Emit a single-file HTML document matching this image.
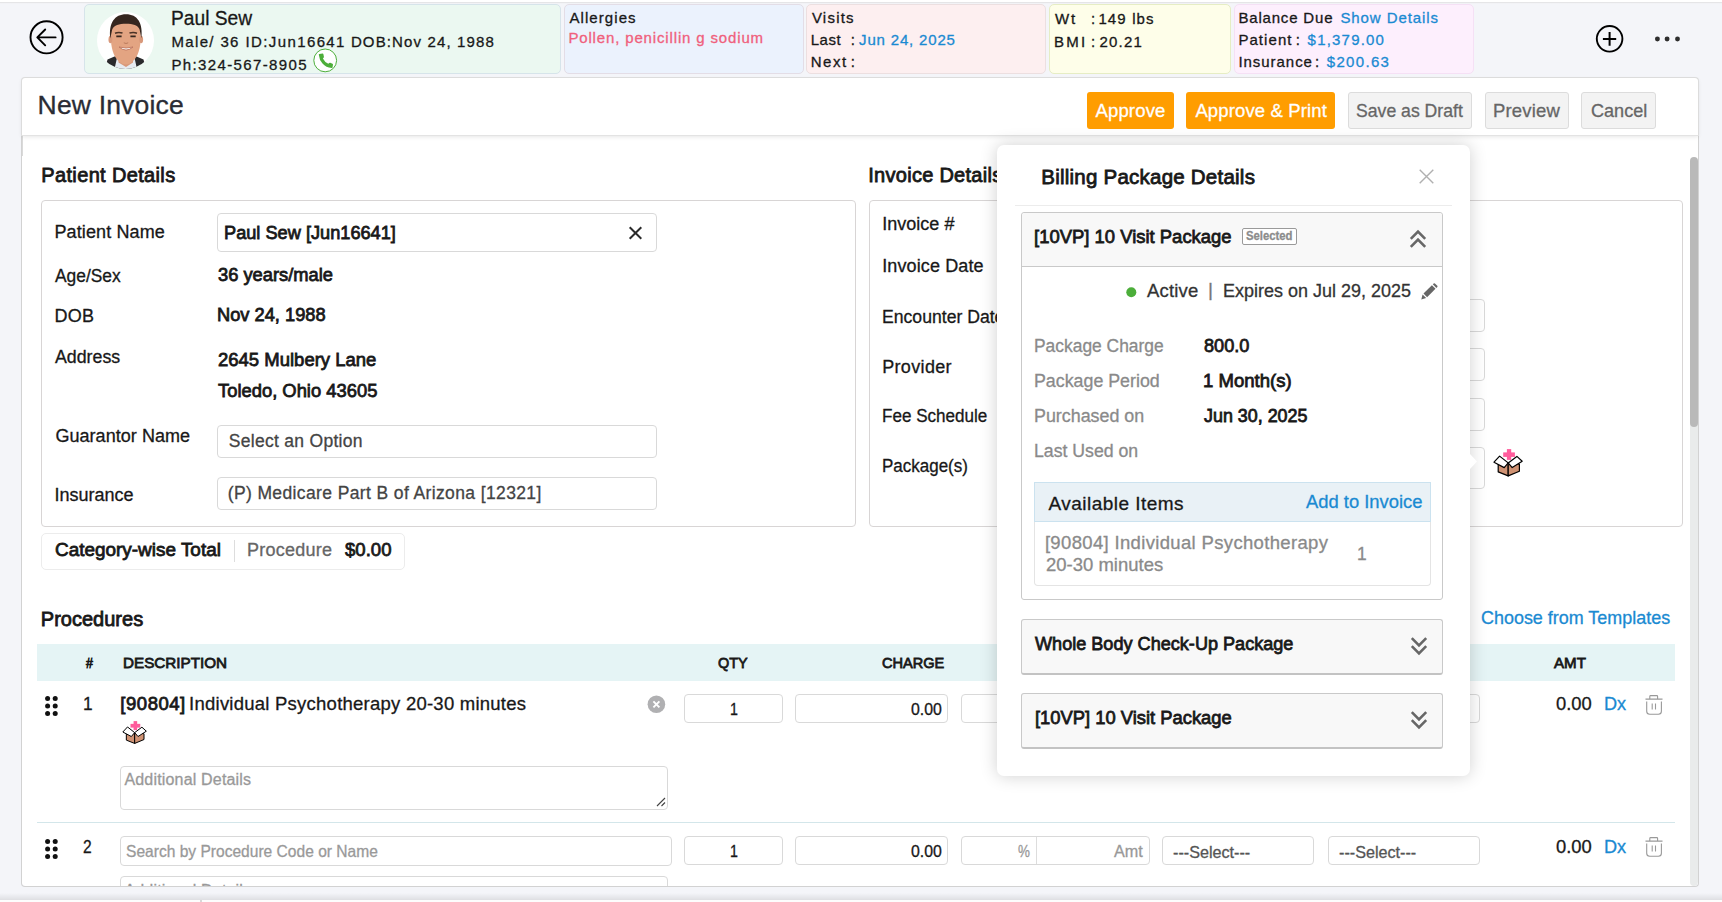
<!DOCTYPE html>
<html lang="en">
<head>
<meta charset="utf-8">
<title>New Invoice</title>
<style>
*{box-sizing:border-box;margin:0;padding:0}
html,body{width:1722px;height:902px;overflow:hidden}
body{position:relative;background:#f4f5f9;font-family:"Liberation Sans",sans-serif;color:#1f1f1f}
.t{position:absolute;white-space:pre;display:block;transform-origin:0 50%;-webkit-text-stroke:.3px}
.abs,.card,.inp,.btn,.ic,.pkg,.box{position:absolute}
svg{display:block;overflow:visible}
#topshade{position:absolute;left:0;top:0;width:1722px;height:5px;background:linear-gradient(#fff 0,#fff 1.8px,#e4e4e6 2px,#e6e6e8 3px,#f4f5f9 3.6px)}
#top{position:absolute;left:0;top:0;width:1722px;height:78px}
.card{top:4px;height:70px;border:1px solid #d9e3ea;border-radius:5px}
#title{position:absolute;left:22px;top:78px;width:1676px;height:57px;background:#fff;border-radius:3px 3px 0 0;box-shadow:0 2px 4px rgba(0,0,0,.10);z-index:3}
#main{position:absolute;left:22px;top:135px;width:1676px;height:751px;background:#fff;border-radius:0 0 4px 4px;overflow:hidden;z-index:1}
#tframe{position:absolute;left:21px;top:77px;width:1678px;height:59px;border:1px solid #dcdcdc;border-bottom-color:#e3e3e3;border-radius:4px 4px 0 0;z-index:4;pointer-events:none}
#mframe{position:absolute;left:21px;top:135px;width:1678px;height:752px;border:1px solid #d2d2d2;border-top:none;border-radius:0 0 4px 4px;z-index:2;pointer-events:none}
.btn{top:14px;height:37px;border-radius:3px}
.btn.o{background:#ff9d00}
.btn.g{background:#f3f3f3;border:1px solid #dcdcdc}
.box{border:1px solid #d8d5d5;border-radius:4px;background:#fff}
.inp{border:1px solid #d9d9d9;border-radius:4px;background:#fff}
#modal{position:absolute;left:997px;top:145px;width:473px;height:631px;background:#fff;border-radius:7px;box-shadow:0 0 17px rgba(0,0,0,.19);z-index:5}
.acc{position:absolute;left:24px;width:422px;border:1px solid #c9c9c9;border-radius:3px;background:#f8f8f8}
.acc.c{border-bottom:2px solid #c3c3c3}
</style>
</head>
<body>
<div id="topshade"></div>
<header id="top">
  <svg class="ic" style="left:28px;top:20.4px" width="37" height="37" viewBox="0 0 37 37" fill="none" stroke="#000" stroke-width="1.9" stroke-linecap="round" stroke-linejoin="round"><circle cx="18.55" cy="17.35" r="16.05"/><path d="M27.6 17.4H9.8M17.2 9.5L9.3 17.4L17.2 25.3"/></svg>
  <section class="card" style="left:84px;width:477px;background:#ebf8f1;border-color:#d6e4ea"></section>
  <svg class="ic" style="left:97px;top:12px;overflow:hidden;border-radius:50%;background:#fff" width="57" height="57" viewBox="0 0 57 57">
    <g>
      <path d="M8 57L10.5 47.5L21 43L36 43L46.5 47.5L49 57Z" fill="#2a2a2c"/>
      <path d="M17.5 57L20.5 43.5L29 53L37 43.5L40 57Z" fill="#e6ebf1"/>
      <path d="M21.5 38H36V50.5L29 55L21.5 50.5Z" fill="#d8987a"/>
      <path d="M13.8 24C13.8 12 19 8 28.8 8C38.6 8 43.8 12 43.8 24C43.8 36 41 44 36.5 48.5C33.5 51.5 31 52.5 28.8 52.5C26.600000000000001 52.5 24 51.5 21 48.5C16.5 44 13.8 36 13.8 24Z" fill="#e3a482"/>
      <ellipse cx="13.4" cy="27.5" rx="1.9" ry="3.8" fill="#d8987a"/><ellipse cx="44.2" cy="27.5" rx="1.9" ry="3.8" fill="#d8987a"/>
      <path d="M13.3 26.5C11.5 11 17.5 2.2 29 2.2C40.5 2.2 46.2 11 44.4 26.5L42.6 17.5C41 13.4 36 11.8 29 11.8C22 11.8 17 13.4 15.2 17.5Z" fill="#35261f"/>
      <path d="M18 21.2Q21.5 19.8 25.5 21M32.5 21Q36.5 19.8 40 21.2" stroke="#4a3226" stroke-width="1.5" fill="none"/>
      <path d="M19.3 24.4H24.6M33.4 24.4H38.7" stroke="#35261f" stroke-width="1.9" fill="none"/>
      <path d="M22 35Q29 41 36 35Q29 37.2 22 35Z" fill="#fff" stroke="#b86f58" stroke-width=".8"/>
      <path d="M26.8 30.8Q29 32.2 31.2 30.8" stroke="#b97b5d" stroke-width="1" fill="none"/>
    </g>
  </svg>
  <svg class="ic" style="left:312.5px;top:48px" width="25" height="25" viewBox="0 0 25 25"><circle cx="12.2" cy="12.4" r="11.4" fill="#fff" stroke="#4cae3a" stroke-width="1"/><path d="M6.3 5.9L9.6 5.6Q10.3 5.6 10.4 6.3L10.9 8.7Q11 9.3 10.6 9.7L9.9 10.5Q11.6 14 15.3 15.8L16.2 15Q16.7 14.6 17.3 14.8L19.5 15.7Q20.1 16 20 16.7L19.5 19.6Q19.3 20.2 18.6 20.1Q13 19.6 9.5 15.6Q6.2 11.8 5.8 6.7Q5.7 6 6.3 5.9Z" fill="#4cae3a"/></svg>
  <section class="card" style="left:564px;width:240px;background:#ebf2fd;border-color:#e3dde6"></section>
  <section class="card" style="left:806px;width:240px;background:#fdeff0;border-color:#ecdfe0"></section>
  <section class="card" style="left:1049px;width:182px;background:#fefee9;border-color:#e6edc4"></section>
  <section class="card" style="left:1234px;width:240px;background:#fdeffd;border-color:#f5e0f5"></section>
  <svg class="ic" style="left:1595px;top:25px" width="29" height="29" viewBox="0 0 29 29" fill="none" stroke="#000" stroke-width="1.9"><circle cx="14.6" cy="13.85" r="12.8"/><path d="M14.6 7.1V20.7M7.9 13.9H21.2" stroke-width="2"/></svg>
  <svg class="ic" style="left:1654px;top:36px" width="28" height="6" viewBox="0 0 28 6" fill="#2e2e2e"><circle cx="3.4" cy="3" r="2.45"/><circle cx="13.1" cy="3" r="2.45"/><circle cx="23.5" cy="3" r="2.45"/></svg>
  <span class="t" style="left:171.4px;top:7.0px;font-size:20px;line-height:22px;color:#181818;transform:scaleX(0.9602);">Paul Sew</span>
<span class="t" style="left:171.4px;top:33.0px;font-size:15px;line-height:17px;color:#181818;letter-spacing:1.36px;">Male/ 36</span>
<span class="t" style="left:245.4px;top:33.0px;font-size:15px;line-height:17px;color:#181818;letter-spacing:1.40px;">ID:Jun16641</span>
<span class="t" style="left:350.9px;top:33.0px;font-size:15px;line-height:17px;color:#181818;letter-spacing:1.14px;">DOB:Nov 24, 1988</span>
<span class="t" style="left:171.4px;top:56.0px;font-size:15px;line-height:17px;color:#181818;letter-spacing:1.37px;">Ph:324-567-8905</span>
<span class="t" style="left:569.4px;top:9.0px;font-size:15px;line-height:17px;color:#181818;letter-spacing:1.08px;">Allergies</span>
<span class="t" style="left:568.4px;top:29.0px;font-size:15px;line-height:17px;color:#f0607c;letter-spacing:0.85px;">Pollen, penicillin g sodium</span>
<span class="t" style="left:811.9px;top:9.0px;font-size:15px;line-height:17px;color:#181818;letter-spacing:1.23px;">Visits</span>
<span class="t" style="left:810.7px;top:31.0px;font-size:15px;line-height:17px;color:#181818;letter-spacing:0.57px;">Last</span>
<span class="t" style="left:850.7px;top:31.0px;font-size:15px;line-height:17px;color:#181818;">:</span>
<span class="t" style="left:859.1px;top:31.0px;font-size:15px;line-height:17px;color:#1a8ad2;letter-spacing:0.83px;">Jun 24, 2025</span>
<span class="t" style="left:810.7px;top:53.0px;font-size:15px;line-height:17px;color:#181818;letter-spacing:1.58px;">Next</span>
<span class="t" style="left:850.7px;top:53.0px;font-size:15px;line-height:17px;color:#181818;">:</span>
<span class="t" style="left:1054.9px;top:10.0px;font-size:15px;line-height:17px;color:#181818;letter-spacing:2.04px;">Wt</span>
<span class="t" style="left:1090.9px;top:10.0px;font-size:15px;line-height:17px;color:#181818;">:</span>
<span class="t" style="left:1098.4px;top:10.0px;font-size:15px;line-height:17px;color:#181818;letter-spacing:1.14px;">149 lbs</span>
<span class="t" style="left:1053.9px;top:33.0px;font-size:15px;line-height:17px;color:#181818;letter-spacing:2.35px;">BMI</span>
<span class="t" style="left:1090.9px;top:33.0px;font-size:15px;line-height:17px;color:#181818;">:</span>
<span class="t" style="left:1099.4px;top:33.0px;font-size:15px;line-height:17px;color:#181818;letter-spacing:1.25px;">20.21</span>
<span class="t" style="left:1238.4px;top:9.0px;font-size:15px;line-height:17px;color:#181818;letter-spacing:0.82px;">Balance Due</span>
<span class="t" style="left:1340.4px;top:9.0px;font-size:15px;line-height:17px;color:#1a8ad2;letter-spacing:0.92px;">Show Details</span>
<span class="t" style="left:1238.4px;top:31.0px;font-size:15px;line-height:17px;color:#181818;letter-spacing:1.06px;">Patient</span>
<span class="t" style="left:1295.8px;top:31.0px;font-size:15px;line-height:17px;color:#181818;">:</span>
<span class="t" style="left:1307.6px;top:31.0px;font-size:15px;line-height:17px;color:#1a8ad2;letter-spacing:1.20px;">$1,379.00</span>
<span class="t" style="left:1238.4px;top:53.0px;font-size:15px;line-height:17px;color:#181818;letter-spacing:0.96px;">Insurance</span>
<span class="t" style="left:1315.1px;top:53.0px;font-size:15px;line-height:17px;color:#181818;">:</span>
<span class="t" style="left:1326.8px;top:53.0px;font-size:15px;line-height:17px;color:#1a8ad2;letter-spacing:1.32px;">$200.63</span>
</header>

<div id="title">
  <div class="btn o" style="left:1065px;width:87px"></div>
  <div class="btn o" style="left:1164px;width:149px"></div>
  <div class="btn g" style="left:1326px;width:124px"></div>
  <div class="btn g" style="left:1463px;width:84px"></div>
  <div class="btn g" style="left:1559px;width:75px"></div>
  <span class="t" style="left:15.6px;top:12.0px;font-size:26.5px;line-height:30px;color:#2a2c35;letter-spacing:0.17px;">New Invoice</span>
<span class="t" style="left:1073.4px;top:22.0px;font-size:18.5px;line-height:21px;color:#fff;letter-spacing:0.18px;">Approve</span>
<span class="t" style="left:1173.4px;top:22.0px;font-size:18.5px;line-height:21px;color:#fff;letter-spacing:0.13px;">Approve &amp; Print</span>
<span class="t" style="left:1334.4px;top:22.0px;font-size:18.5px;line-height:21px;color:#666;transform:scaleX(0.9532);">Save as Draft</span>
<span class="t" style="left:1470.9px;top:22.0px;font-size:18.5px;line-height:21px;color:#666;letter-spacing:0.21px;">Preview</span>
<span class="t" style="left:1568.9px;top:22.0px;font-size:18.5px;line-height:21px;color:#666;transform:scaleX(0.9774);">Cancel</span>
</div>

<div id="tframe"></div>
<div id="mframe"></div>
<main id="main">
  <i class="abs" style="left:0;top:0;width:1px;height:21px;background:#dadada"></i>
  <!-- patient details -->
  <section class="box" style="left:19px;top:65px;width:815px;height:327px"></section>
  <div class="inp" style="left:195px;top:78px;width:440px;height:39px"></div>
  <svg class="ic" style="left:606px;top:91px" width="15" height="14" viewBox="0 0 15 14" fill="none" stroke="#2a2a2a" stroke-width="2"><path d="M1.7 1.2L13.3 12.8M13.3 1.2L1.7 12.8"/></svg>
  <div class="inp" style="left:195px;top:290px;width:440px;height:33px"></div>
  <div class="inp" style="left:195px;top:342px;width:440px;height:32.5px"></div>
  <section class="box" style="left:19px;top:398px;width:364px;height:36.5px;border-color:#ececec;border-radius:5px"></section>
  <i class="abs" style="left:212px;top:405px;width:1px;height:22px;background:#ddd"></i>
  <!-- invoice details -->
  <section class="box" style="left:847px;top:65px;width:814px;height:327px"></section>
  <div class="inp" style="left:1140px;top:164px;width:323px;height:32.5px"></div>
  <div class="inp" style="left:1140px;top:213px;width:323px;height:33px"></div>
  <div class="inp" style="left:1140px;top:263px;width:323px;height:33px"></div>
  <div class="inp" style="left:1140px;top:312px;width:323px;height:42px"></div>
  <svg class="pkg" viewBox="0 0 30 28" width="30" height="28" style="left:1471px;top:313.8px">
<polygon points="5.2,15.2 15.2,13.9 15.2,26.9 5.2,22.9" fill="#cf9273" stroke="#000" stroke-width="1.2" stroke-linejoin="round"/>
<polygon points="15.2,13.9 26.4,15.2 26.4,22.2 15.2,26.9" fill="#cf9273" stroke="#000" stroke-width="1.2" stroke-linejoin="round"/>
<polygon points="6.6,7.1 1,13.2 11.2,18.6 15.2,13.9" fill="#fff" stroke="#000" stroke-width="1.2" stroke-linejoin="round"/>
<polygon points="23.9,7.4 29.2,12.2 19.2,18.6 15.2,13.9" fill="#fff" stroke="#000" stroke-width="1.2" stroke-linejoin="round"/>
<rect x="13.9" y="0.1" width="4.3" height="10.8" fill="#ff5c9c"/>
<rect x="10.2" y="3.4" width="11.7" height="4.5" fill="#ff5c9c"/>
</svg>
  <!-- procedures -->
  <div class="abs" style="left:15px;top:509px;width:1638px;height:37px;background:#e5f4f5"></div>
  <svg class="ic" viewBox="0 0 14 20" width="14" height="20" style="left:23px;top:560.5px" fill="#111">
<circle cx="2.6" cy="2.6" r="2.5"/><circle cx="10.2" cy="2.6" r="2.5"/>
<circle cx="2.6" cy="10" r="2.5"/><circle cx="10.2" cy="10" r="2.5"/>
<circle cx="2.6" cy="17.4" r="2.5"/><circle cx="10.2" cy="17.4" r="2.5"/></svg>
  <svg class="pkg" viewBox="0 0 30 28" width="25" height="23.4" style="left:100px;top:586px">
<polygon points="5.2,15.2 15.2,13.9 15.2,26.9 5.2,22.9" fill="#cf9273" stroke="#000" stroke-width="1.2" stroke-linejoin="round"/>
<polygon points="15.2,13.9 26.4,15.2 26.4,22.2 15.2,26.9" fill="#cf9273" stroke="#000" stroke-width="1.2" stroke-linejoin="round"/>
<polygon points="6.6,7.1 1,13.2 11.2,18.6 15.2,13.9" fill="#fff" stroke="#000" stroke-width="1.2" stroke-linejoin="round"/>
<polygon points="23.9,7.4 29.2,12.2 19.2,18.6 15.2,13.9" fill="#fff" stroke="#000" stroke-width="1.2" stroke-linejoin="round"/>
<rect x="13.9" y="0.1" width="4.3" height="10.8" fill="#ff5c9c"/>
<rect x="10.2" y="3.4" width="11.7" height="4.5" fill="#ff5c9c"/>
</svg>
  <svg class="ic" style="left:625px;top:560px" width="19" height="19" viewBox="0 0 19 19"><circle cx="9.4" cy="9.2" r="8.8" fill="#b0b0b2"/><path d="M6.4 6.3L12.4 12.3M12.4 6.3L6.4 12.3" stroke="#fff" stroke-width="1.9" fill="none"/></svg>
  <div class="inp" style="left:98px;top:630.5px;width:548px;height:44px"></div>
  <svg class="ic" style="left:634px;top:662px" width="10" height="10" viewBox="0 0 10 10" fill="none" stroke="#444" stroke-width="1.1"><path d="M1 9L9 1M5.5 9L9 5.5"/></svg>
  
<div class="inp" style="left:662px;top:558.5px;width:99px;height:29.4px"></div>
<div class="inp" style="left:773px;top:558.5px;width:153px;height:29.4px"></div>
<div class="inp" style="left:939px;top:558.5px;width:189px;height:29.4px"><i style="position:absolute;left:74px;top:0;width:1px;height:27.4px;background:#ddd"></i></div>
<div class="inp" style="left:1140px;top:558.5px;width:152px;height:29.4px"></div>
<div class="inp" style="left:1306px;top:558.5px;width:152px;height:29.4px"></div>
<svg class="ic" viewBox="0 0 18 20" width="18" height="20" style="left:1623px;top:560px" fill="none" stroke="#999" stroke-width="1.1">
<path d="M0.5 4.1H17.5M4.8 4.1V1.4Q4.8 0.6 5.6 0.6H11.8Q12.6 0.6 12.6 1.4V4.1M1.7 6.5V16.3Q1.7 19.3 4.7 19.3H13.4Q16.4 19.3 16.4 16.3V6.5M7.2 8.4V14.5M10.5 8.4V14.5"/>
</svg>
  <i class="abs" style="left:15px;top:686.5px;width:1638px;height:1.4px;background:#d3e6ea"></i>
  <svg class="ic" viewBox="0 0 14 20" width="14" height="20" style="left:23px;top:703.5px" fill="#111">
<circle cx="2.6" cy="2.6" r="2.5"/><circle cx="10.2" cy="2.6" r="2.5"/>
<circle cx="2.6" cy="10" r="2.5"/><circle cx="10.2" cy="10" r="2.5"/>
<circle cx="2.6" cy="17.4" r="2.5"/><circle cx="10.2" cy="17.4" r="2.5"/></svg>
  <div class="inp" style="left:98px;top:701px;width:552px;height:30px"></div>
  
<div class="inp" style="left:662px;top:701px;width:99px;height:29.4px"></div>
<div class="inp" style="left:773px;top:701px;width:153px;height:29.4px"></div>
<div class="inp" style="left:939px;top:701px;width:189px;height:29.4px"><i style="position:absolute;left:74px;top:0;width:1px;height:27.4px;background:#ddd"></i></div>
<div class="inp" style="left:1140px;top:701px;width:152px;height:29.4px"></div>
<div class="inp" style="left:1306px;top:701px;width:152px;height:29.4px"></div>
<svg class="ic" viewBox="0 0 18 20" width="18" height="20" style="left:1623px;top:701.5px" fill="none" stroke="#999" stroke-width="1.1">
<path d="M0.5 4.1H17.5M4.8 4.1V1.4Q4.8 0.6 5.6 0.6H11.8Q12.6 0.6 12.6 1.4V4.1M1.7 6.5V16.3Q1.7 19.3 4.7 19.3H13.4Q16.4 19.3 16.4 16.3V6.5M7.2 8.4V14.5M10.5 8.4V14.5"/>
</svg>
  <div class="inp" style="left:98px;top:741px;width:548px;height:44px"></div>
  <!-- scrollbar -->
  <div class="abs" style="left:1668.2px;top:26px;width:7.8px;height:725px;background:#e9ebeb;border-radius:0 0 4px 4px"></div>
  <div class="abs" style="left:1668.2px;top:22.2px;width:7.8px;height:269.8px;background:#b9b9b9;border-radius:4px"></div>
  <span class="t" style="left:19.3px;top:29.0px;font-size:20px;line-height:22px;color:#181818;-webkit-text-stroke:0.8px;letter-spacing:0.35px;">Patient Details</span>
<span class="t" style="left:32.4px;top:87.0px;font-size:18px;line-height:20px;color:#181818;letter-spacing:0.13px;">Patient Name</span>
<span class="t" style="left:201.5px;top:87.0px;font-size:19px;line-height:21px;color:#181818;-webkit-text-stroke:0.8px;transform:scaleX(0.9572);">Paul Sew [Jun16641]</span>
<span class="t" style="left:33.4px;top:131.0px;font-size:18px;line-height:20px;color:#181818;transform:scaleX(0.9655);">Age/Sex</span>
<span class="t" style="left:196.4px;top:129.0px;font-size:19px;line-height:21px;color:#181818;-webkit-text-stroke:0.8px;transform:scaleX(0.9641);">36 years/male</span>
<span class="t" style="left:32.4px;top:171.0px;font-size:18px;line-height:20px;color:#181818;letter-spacing:0.35px;">DOB</span>
<span class="t" style="left:195.4px;top:169.0px;font-size:19px;line-height:21px;color:#181818;-webkit-text-stroke:0.8px;transform:scaleX(0.9609);">Nov 24, 1988</span>
<span class="t" style="left:33.4px;top:212.0px;font-size:18px;line-height:20px;color:#181818;transform:scaleX(0.9874);">Address</span>
<span class="t" style="left:196.4px;top:214.0px;font-size:19px;line-height:21px;color:#181818;-webkit-text-stroke:0.8px;transform:scaleX(0.9735);">2645 Mulbery Lane</span>
<span class="t" style="left:196.4px;top:245.0px;font-size:19px;line-height:21px;color:#181818;-webkit-text-stroke:0.8px;transform:scaleX(0.9670);">Toledo, Ohio 43605</span>
<span class="t" style="left:33.4px;top:291.0px;font-size:18px;line-height:20px;color:#181818;letter-spacing:0.05px;">Guarantor Name</span>
<span class="t" style="left:206.7px;top:296.0px;font-size:17.5px;line-height:20px;color:#444;letter-spacing:0.30px;">Select an Option</span>
<span class="t" style="left:32.4px;top:350.0px;font-size:18px;line-height:20px;color:#181818;letter-spacing:0.02px;">Insurance</span>
<span class="t" style="left:205.7px;top:348.0px;font-size:17.5px;line-height:20px;color:#444;letter-spacing:0.38px;">(P) Medicare Part B of Arizona [12321]</span>
<span class="t" style="left:33.0px;top:404.0px;font-size:19px;line-height:21px;color:#181818;-webkit-text-stroke:0.8px;transform:scaleX(0.9962);">Category-wise Total</span>
<span class="t" style="left:224.9px;top:405.0px;font-size:18px;line-height:20px;color:#666;letter-spacing:0.27px;">Procedure</span>
<span class="t" style="left:322.8px;top:404.0px;font-size:19px;line-height:21px;color:#181818;-webkit-text-stroke:0.8px;transform:scaleX(0.9770);">$0.00</span>
<span class="t" style="left:846.3px;top:29.0px;font-size:20px;line-height:22px;color:#181818;-webkit-text-stroke:0.8px;letter-spacing:0.27px;">Invoice Details</span>
<span class="t" style="left:860.2px;top:79.0px;font-size:18px;line-height:20px;color:#181818;letter-spacing:0.02px;">Invoice #</span>
<span class="t" style="left:860.2px;top:121.0px;font-size:18px;line-height:20px;color:#181818;letter-spacing:0.12px;">Invoice Date</span>
<span class="t" style="left:860.2px;top:172.0px;font-size:18px;line-height:20px;color:#181818;transform:scaleX(0.9785);">Encounter Date</span>
<span class="t" style="left:860.2px;top:222.0px;font-size:18px;line-height:20px;color:#181818;letter-spacing:0.34px;">Provider</span>
<span class="t" style="left:860.3px;top:271.0px;font-size:18px;line-height:20px;color:#181818;transform:scaleX(0.9485);">Fee Schedule</span>
<span class="t" style="left:860.3px;top:321.0px;font-size:18px;line-height:20px;color:#181818;transform:scaleX(0.9434);">Package(s)</span>
<span class="t" style="left:18.8px;top:473.0px;font-size:20px;line-height:22px;color:#181818;-webkit-text-stroke:0.8px;letter-spacing:0.01px;">Procedures</span>
<span class="t" style="left:1459.4px;top:472.0px;font-size:18.5px;line-height:21px;color:#1a8ad2;transform:scaleX(0.9697);">Choose from Templates</span>
<span class="t" style="left:63.8px;top:519.0px;font-size:15.5px;line-height:17px;color:#181818;-webkit-text-stroke:0.8px;transform:scaleX(0.8000);">#</span>
<span class="t" style="left:101.3px;top:519.0px;font-size:15.5px;line-height:17px;color:#181818;-webkit-text-stroke:0.8px;transform:scaleX(0.9823);">DESCRIPTION</span>
<span class="t" style="left:696.3px;top:519.0px;font-size:15.5px;line-height:17px;color:#181818;-webkit-text-stroke:0.8px;transform:scaleX(0.9326);">QTY</span>
<span class="t" style="left:859.8px;top:519.0px;font-size:15.5px;line-height:17px;color:#181818;-webkit-text-stroke:0.8px;transform:scaleX(0.9382);">CHARGE</span>
<span class="t" style="left:1532.3px;top:519.0px;font-size:15.5px;line-height:17px;color:#181818;-webkit-text-stroke:0.8px;transform:scaleX(0.9744);">AMT</span>
<span class="t" style="left:60.5px;top:558.0px;font-size:19px;line-height:21px;color:#181818;transform:scaleX(0.9111);">1</span>
<span class="t" style="left:707.5px;top:565.0px;font-size:16.5px;line-height:18px;color:#181818;transform:scaleX(0.8625);">1</span>
<span class="t" style="left:888.9px;top:565.0px;font-size:16.5px;line-height:18px;color:#181818;transform:scaleX(0.9613);">0.00</span>
<span class="t" style="left:1533.9px;top:558.0px;font-size:19px;line-height:21px;color:#181818;transform:scaleX(0.9667);">0.00</span>
<span class="t" style="left:1582.4px;top:558.0px;font-size:19px;line-height:21px;color:#1a8ad2;transform:scaleX(0.9551);">Dx</span>
<span class="t" style="left:61.4px;top:701.0px;font-size:19px;line-height:21px;color:#181818;transform:scaleX(0.8200);">2</span>
<span class="t" style="left:707.5px;top:707.0px;font-size:16.5px;line-height:18px;color:#181818;transform:scaleX(0.8625);">1</span>
<span class="t" style="left:888.9px;top:707.0px;font-size:16.5px;line-height:18px;color:#181818;transform:scaleX(0.9613);">0.00</span>
<span class="t" style="left:1533.9px;top:701.0px;font-size:19px;line-height:21px;color:#181818;transform:scaleX(0.9667);">0.00</span>
<span class="t" style="left:1582.4px;top:701.0px;font-size:19px;line-height:21px;color:#1a8ad2;transform:scaleX(0.9551);">Dx</span>
<span class="t" style="left:98.3px;top:558.0px;font-size:18.5px;line-height:21px;color:#181818;-webkit-text-stroke:0.8px;letter-spacing:0.54px;">[90804]</span>
<span class="t" style="left:167.1px;top:558.0px;font-size:18.5px;line-height:21px;color:#181818;letter-spacing:0.24px;">Individual Psychotherapy 20-30 minutes</span>
<span class="t" style="left:102.4px;top:636.0px;font-size:16px;line-height:17px;color:#999;letter-spacing:0.18px;">Additional Details</span>
<span class="t" style="left:104.4px;top:707.0px;font-size:16.5px;line-height:18px;color:#999;transform:scaleX(0.9437);">Search by Procedure Code or Name</span>
<span class="t" style="left:102.4px;top:747.0px;font-size:16px;line-height:17px;color:#999;letter-spacing:0.18px;">Additional Details</span>
<span class="t" style="left:995.9px;top:707.0px;font-size:16.5px;line-height:18px;color:#999;transform:scaleX(0.8133);">%</span>
<span class="t" style="left:1091.9px;top:707.0px;font-size:16.5px;line-height:18px;color:#999;transform:scaleX(0.9815);">Amt</span>
<span class="t" style="left:1151.4px;top:708.0px;font-size:16.5px;line-height:18px;color:#555;transform:scaleX(0.9792);">---Select---</span>
<span class="t" style="left:1316.9px;top:708.0px;font-size:16.5px;line-height:18px;color:#555;transform:scaleX(0.9792);">---Select---</span>
<span class="t" style="left:995.9px;top:565.0px;font-size:16.5px;line-height:18px;color:#999;transform:scaleX(0.8133);">%</span>
<span class="t" style="left:1091.9px;top:565.0px;font-size:16.5px;line-height:18px;color:#999;transform:scaleX(0.9815);">Amt</span>
<span class="t" style="left:1151.4px;top:566.0px;font-size:16.5px;line-height:18px;color:#555;transform:scaleX(0.9792);">---Select---</span>
<span class="t" style="left:1316.9px;top:566.0px;font-size:16.5px;line-height:18px;color:#555;transform:scaleX(0.9792);">---Select---</span>
</main>

<aside id="modal">
  <svg class="ic" style="left:422px;top:24px" width="15" height="15" viewBox="0 0 15 15" fill="none" stroke="#b0b0b0" stroke-width="1.4"><path d="M0.7 0.7L14.3 14.3M14.3 0.7L0.7 14.3"/></svg>
  <i class="abs" style="left:18px;top:59.5px;width:437px;height:1px;background:#ececec"></i>
  <svg class="ic" style="left:473px;top:308.5px" width="8" height="15" viewBox="0 0 8 15"><path d="M0 0L7 7.5L0 15Z" fill="#fff"/></svg>
  <section class="acc" style="top:67px;height:388px;background:#fff">
    <div class="abs" style="left:0;top:0;width:420px;height:54px;background:#f8f8f8;border-bottom:1px solid #c9c9c9;border-radius:3px 3px 0 0"></div>
  </section>
  <div class="abs" style="left:245px;top:83px;width:54.5px;height:17px;border:1px solid #9a9a9a;border-radius:2px;background:#fff"></div>
  <svg class="ic" viewBox="0 0 16 18" width="16" height="18" style="left:413px;top:85px" fill="none" stroke="#676767" stroke-width="2.6">
<path d="M0.8 8.9L8 1.6L15.2 8.9M0.8 16.8L8 9.5L15.2 16.8"/></svg>
  <svg class="ic" style="left:128.9px;top:141.8px" width="11" height="11"><circle cx="5.3" cy="5.2" r="5" fill="#4cae3a"/></svg>
  <svg class="ic" style="left:423.5px;top:137.5px" width="17" height="17" viewBox="0 0 17 17" fill="#666"><path d="M0.3 16.4L1.6 11.6L5.1 15.1Z"/><path d="M2.5 10.6L10.9 2.2L14.5 5.8L6.1 14.2Z"/><path d="M11.8 1.3L12.7 0.4Q13.3 -0.1 13.9 0.4L16.3 2.8Q16.8 3.4 16.3 4L15.4 4.9Z"/></svg>
  <div class="abs" style="left:37px;top:337px;width:397px;height:40px;background:#e9f1f6;border:1px solid #cbe2ef"></div>
  <div class="abs" style="left:37px;top:377px;width:397px;height:63.5px;background:#fff;border:1px solid #e4e4e4;border-top:none;border-radius:0 0 4px 4px"></div>
  <section class="acc c" style="top:474px;height:56px"></section>
  <svg class="ic" viewBox="0 0 16 18" width="16" height="18" style="left:414px;top:491.5px" fill="none" stroke="#676767" stroke-width="2.6">
<path d="M0.8 1.2L8 8.5L15.2 1.2M0.8 9.1L8 16.4L15.2 9.1"/></svg>
  <section class="acc c" style="top:548px;height:56px"></section>
  <svg class="ic" viewBox="0 0 16 18" width="16" height="18" style="left:414px;top:566px" fill="none" stroke="#676767" stroke-width="2.6">
<path d="M0.8 1.2L8 8.5L15.2 1.2M0.8 9.1L8 16.4L15.2 9.1"/></svg>
  <span class="t" style="left:44.3px;top:20.0px;font-size:20.5px;line-height:23px;color:#181818;-webkit-text-stroke:0.8px;letter-spacing:0.23px;">Billing Package Details</span>
<span class="t" style="left:37.4px;top:81.0px;font-size:19px;line-height:21px;color:#181818;-webkit-text-stroke:0.8px;transform:scaleX(0.9711);">[10VP] 10 Visit Package</span>
<span class="t" style="left:248.9px;top:84.0px;font-size:12px;line-height:14px;color:#8c8c8c;font-weight:700;transform:scaleX(0.9423);">Selected</span>
<span class="t" style="left:149.9px;top:135.0px;font-size:18.5px;line-height:21px;color:#333;letter-spacing:0.22px;">Active</span>
<span class="t" style="left:211.3px;top:135.0px;font-size:18px;line-height:20px;color:#777;transform:scaleX(1.0667);">|</span>
<span class="t" style="left:226.4px;top:135.0px;font-size:18.5px;line-height:21px;color:#333;transform:scaleX(0.9721);">Expires on Jul 29, 2025</span>
<span class="t" style="left:36.9px;top:191.0px;font-size:18px;line-height:20px;color:#8a8a8a;transform:scaleX(0.9671);">Package Charge</span>
<span class="t" style="left:207.3px;top:190.0px;font-size:19px;line-height:21px;color:#181818;-webkit-text-stroke:0.8px;transform:scaleX(0.9557);">800.0</span>
<span class="t" style="left:36.9px;top:226.0px;font-size:18px;line-height:20px;color:#8a8a8a;transform:scaleX(0.9890);">Package Period</span>
<span class="t" style="left:206.3px;top:225.0px;font-size:19px;line-height:21px;color:#181818;-webkit-text-stroke:0.8px;transform:scaleX(0.9768);">1 Month(s)</span>
<span class="t" style="left:36.9px;top:261.0px;font-size:18px;line-height:20px;color:#8a8a8a;transform:scaleX(0.9921);">Purchased on</span>
<span class="t" style="left:207.3px;top:260.0px;font-size:19px;line-height:21px;color:#181818;-webkit-text-stroke:0.8px;transform:scaleX(0.9414);">Jun 30, 2025</span>
<span class="t" style="left:36.9px;top:296.0px;font-size:18px;line-height:20px;color:#8a8a8a;transform:scaleX(0.9822);">Last Used on</span>
<span class="t" style="left:51.4px;top:348.0px;font-size:19px;line-height:21px;color:#181818;letter-spacing:0.48px;">Available Items</span>
<span class="t" style="left:309.4px;top:346.0px;font-size:18.5px;line-height:21px;color:#1a8ad2;transform:scaleX(0.9936);">Add to Invoice</span>
<span class="t" style="left:47.9px;top:387.0px;font-size:18.5px;line-height:21px;color:#8a8a8a;letter-spacing:0.34px;">[90804] Individual Psychotherapy</span>
<span class="t" style="left:48.9px;top:409.0px;font-size:18.5px;line-height:21px;color:#8a8a8a;transform:scaleX(0.9993);">20-30 minutes</span>
<span class="t" style="left:359.9px;top:399.0px;font-size:18px;line-height:20px;color:#8a8a8a;transform:scaleX(0.9667);">1</span>
<span class="t" style="left:38.3px;top:488.0px;font-size:19px;line-height:21px;color:#181818;-webkit-text-stroke:0.8px;transform:scaleX(0.9522);">Whole Body Check-Up Package</span>
<span class="t" style="left:37.6px;top:562.0px;font-size:19px;line-height:21px;color:#181818;-webkit-text-stroke:0.8px;transform:scaleX(0.9667);">[10VP] 10 Visit Package</span>
</aside>
<div class="abs" style="left:0;top:893px;width:1722px;height:7px;background:linear-gradient(rgba(0,0,0,0),rgba(0,0,0,.09))"></div>
<div class="abs" style="left:0;top:900px;width:1722px;height:2px;background:#fdfdfd"></div>
<div class="abs" style="left:200px;top:899.5px;width:1.5px;height:2.5px;background:#d8d8d8"></div>
</body>
</html>
